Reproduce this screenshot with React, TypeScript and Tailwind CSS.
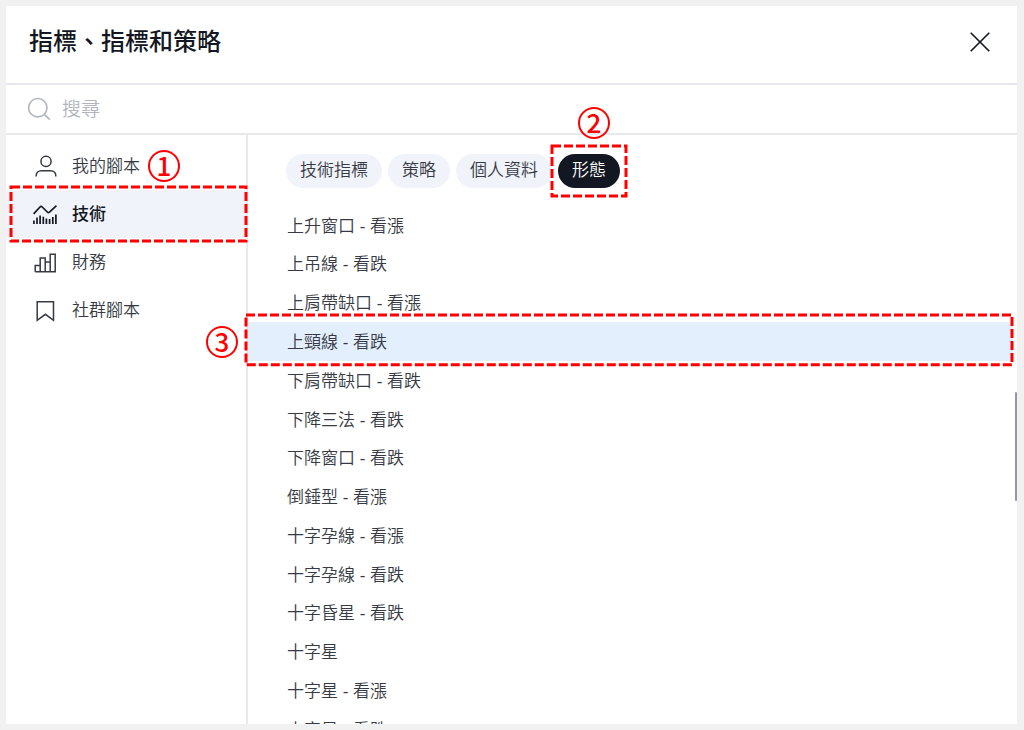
import type { ReactNode } from "react";

const categories = [
  { label: "我的腳本", icon: <UserIcon /> },
  { label: "技術", icon: <TechnicalsIcon />, active: true },
  { label: "財務", icon: <FinancialsIcon /> },
  { label: "社群腳本", icon: <BookmarkIcon /> },
];

const tabs = ["技術指標", "策略", "個人資料", "形態"];
const activeTab = "形態";

const patterns = [
  "上升窗口 - 看漲",
  "上吊線 - 看跌",
  "上肩帶缺口 - 看漲",
  "上頸線 - 看跌",
  "下肩帶缺口 - 看跌",
  "下降三法 - 看跌",
  "下降窗口 - 看跌",
  "倒錘型 - 看漲",
  "十字孕線 - 看漲",
  "十字孕線 - 看跌",
  "十字昏星 - 看跌",
  "十字星",
  "十字星 - 看漲",
  "十字星 - 看跌",
];
const activePattern = "上頸線 - 看跌";

function Icon({ children }: { children: ReactNode }) {
  return (
    <svg
      className="size-6 shrink-0"
      viewBox="0 0 24 24"
      fill="none"
      stroke="currentColor"
      strokeWidth="1.5"
      aria-hidden="true"
    >
      {children}
    </svg>
  );
}

function UserIcon() {
  return (
    <Icon>
      <rect x="8" y="2.3" width="10" height="10.2" rx="4.8" />
      <path d="M3.2 22.5v-.8c0-3 2.2-5 5.2-5h9.2c3 0 5.2 2 5.2 5v.8" />
    </Icon>
  );
}

function TechnicalsIcon() {
  return (
    <Icon>
      <path
        strokeWidth="1.7"
        d="M.6 11.8 7 5c.7-.7 1.5-.7 2.2 0l5.1 5c.7.7 1.5.7 2.2 0l7-6.4"
      />
      <path
        strokeWidth="1.7"
        d="M.9 22v-3.6M4 22v-6.5M7.1 22v-8.6M10.3 22v-7.3M13.4 22v-5.4M16.6 22v-5M19.8 22v-7M22.9 22v-9.6"
      />
    </Icon>
  );
}

function FinancialsIcon() {
  return (
    <Icon>
      <path d="M2.2 21.7v-6.2h5v6.2M7.2 15.5V8h5v13.7M12.2 12h5v9.7M17.2 12V4.3h5v17.4h-20M7.2 21.7v-6.2" />
    </Icon>
  );
}

function BookmarkIcon() {
  return (
    <Icon>
      <path d="M4.2 3.8h16.3v18.5l-8.1-6-8.2 6z" />
    </Icon>
  );
}

function DashedOutline({ className }: { className: string }) {
  return (
    <span className={`pointer-events-none absolute z-10 ${className}`}>
      <svg className="block h-full w-full overflow-visible" aria-hidden="true">
        <rect
          width="100%"
          height="100%"
          fill="none"
          stroke="#ff0000"
          strokeWidth="3"
          strokeDasharray="9 3"
        />
      </svg>
    </span>
  );
}

function Step({ n, className }: { n: number; className: string }) {
  return (
    <span
      className={`pointer-events-none absolute z-10 flex size-8 items-center justify-center rounded-full border-2 border-[#ff0000] pb-[3px] font-['Noto_Sans_CJK_TC',sans-serif] text-[26px] leading-none font-medium text-[#ff0000] ${className}`}
    >
      {n}
    </span>
  );
}

export default function App() {
  return (
    <div className="h-screen bg-[#f1f1f1] py-[6px] pr-[7px] pl-[6px] font-['Liberation_Sans','Noto_Sans_CJK_TC',sans-serif] text-[#363a45]">
      <div
        role="dialog"
        aria-labelledby="dialog-title"
        className="relative flex h-full flex-col overflow-hidden bg-white"
      >
        <header className="flex items-center justify-between border-b-2 border-[#e8e9ef] pt-[18px] pr-[25px] pb-[23px] pl-[23px]">
          <h1
            id="dialog-title"
            className="text-[24px] leading-[36px] font-medium text-[#131722]"
          >
            指標、指標和策略
          </h1>
          <button type="button" aria-label="關閉" className="text-[#131722]">
            <svg
              className="size-6"
              viewBox="0 0 24 24"
              stroke="currentColor"
              strokeWidth="1.6"
            >
              <path d="m2.7 2.7 18.6 18.6M21.3 2.7 2.7 21.3" />
            </svg>
          </button>
        </header>

        <label className="flex items-center gap-[11px] border-b-2 border-[#e8e9ef] px-[21px] py-[10px] text-[#b2b5be]">
          <svg
            className="size-6 shrink-0"
            viewBox="0 0 24 24"
            fill="none"
            stroke="currentColor"
            strokeWidth="1.6"
            aria-hidden="true"
          >
            <circle cx="10.8" cy="10.7" r="9.2" />
            <path d="m17.3 17.3 5.5 5.3" />
          </svg>
          <input
            type="text"
            placeholder="搜尋"
            aria-label="搜尋"
            className="h-[28px] w-full pt-[2px] text-[19px] font-[350] outline-none placeholder:text-[#b2b5be]"
          />
        </label>

        <div className="flex min-h-0 flex-1">
          <nav className="w-[242px] shrink-0 border-r-2 border-[#e8e9ef] pt-[7px]">
            {categories.map(({ label, icon, active }) => (
              <button
                key={label}
                type="button"
                className={`relative flex h-12 w-full items-center gap-[15px] pl-[27px] text-[17px] ${
                  active
                    ? "bg-[#f0f3fa] font-medium text-[#131722]"
                    : "font-[350]"
                }`}
              >
                {icon}
                <span className="pt-[2px]">{label}</span>
                {label === "我的腳本" && (
                  <Step n={1} className="top-2 left-[142px]" />
                )}
                {active && (
                  <DashedOutline className="-top-[3px] right-0 -bottom-[3px] left-[5px]" />
                )}
              </button>
            ))}
          </nav>

          <main className="flex min-w-0 flex-1 flex-col">
            <div className="flex gap-[6px] pt-[19px] pl-[38px]">
              {tabs.map((tab) => (
                <button
                  key={tab}
                  type="button"
                  className={`relative h-[34px] rounded-full px-[14px] text-[17px] font-[350] ${
                    tab === activeTab
                      ? "bg-[#131722] text-white"
                      : "bg-[#f0f3fa]"
                  }`}
                >
                  {tab}
                  {tab === activeTab && (
                    <>
                      <DashedOutline className="-inset-x-[6px] -inset-y-[8px]" />
                      <Step n={2} className="-top-[47px] left-[20px]" />
                    </>
                  )}
                </button>
              ))}
            </div>

            <ul className="mt-[18px] grid h-[543px] shrink-0 auto-rows-fr pr-1">
              {patterns.map((pattern) => (
                <li key={pattern} className="relative">
                  <button
                    type="button"
                    className={`flex h-full w-full items-center pt-[2px] pl-[39px] text-[17px] font-[350] ${
                      pattern === activePattern ? "bg-[#e3effd]" : ""
                    }`}
                  >
                    {pattern}
                  </button>
                  {pattern === activePattern && (
                    <>
                      <DashedOutline className="-top-[7px] right-[1px] -bottom-[4px] -left-[2px]" />
                      <Step n={3} className="top-1 -left-[42px]" />
                    </>
                  )}
                </li>
              ))}
            </ul>
          </main>
        </div>

        <div className="absolute top-[386px] right-0 h-[109px] w-[2px] rounded-full bg-[#9598a1]" />
      </div>
    </div>
  );
}
